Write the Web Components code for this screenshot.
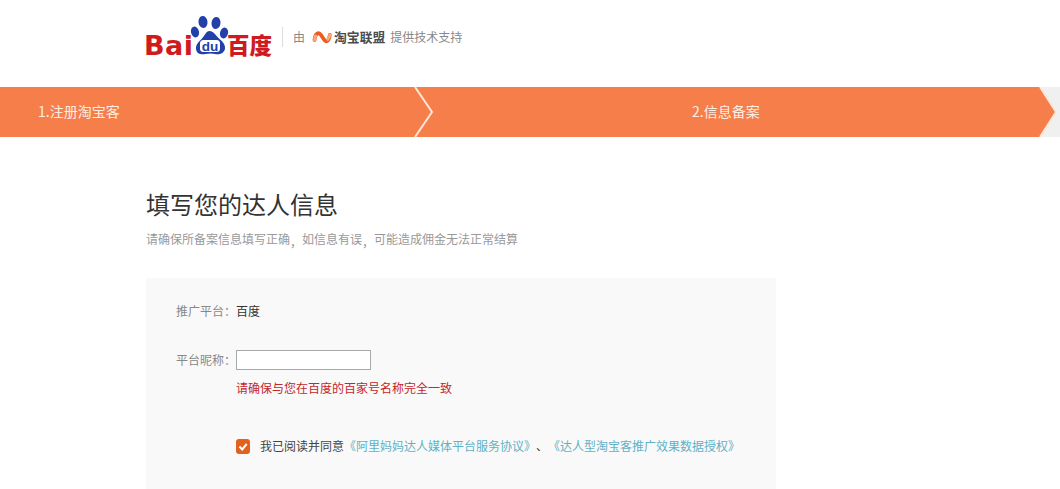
<!DOCTYPE html>
<html lang="zh-CN">
<head>
<meta charset="utf-8">
<title>填写您的达人信息</title>
<style>
html,body{margin:0;height:489px;overflow:hidden;background:#fff}
body{display:flex;flex-direction:column;font-family:"Liberation Sans","Noto Sans CJK SC",sans-serif;font-size:12px;color:#333}
</style>
</head>
<body>
<app-header></app-header>
<step-bar>
  <step-item first>1.注册淘宝客</step-item>
  <step-item>2.信息备案</step-item>
</step-bar>
<page-main>
  <span slot="title">填写您的达人信息</span>
  <span slot="sub">请确保所备案信息填写正确<punct-mark>，</punct-mark>如信息有误<punct-mark>，</punct-mark>可能造成佣金无法正常结算</span>
  <form-panel>
    <form-row label="推广平台">百度</form-row>
    <form-row label="平台昵称" class="gap"><text-box></text-box></form-row>
    <form-row class="err"><err-note>请确保与您在百度的百家号名称完全一致</err-note></form-row>
    <form-row class="agree"><agree-line></agree-line></form-row>
  </form-panel>
</page-main>
<script>
function def(name, html, init){
  customElements.define(name, class extends HTMLElement{
    constructor(){
      super();
      const t=document.createElement('template');
      t.innerHTML=typeof html==='function'?html(this):html;
      this.attachShadow({mode:'open'}).appendChild(t.content.cloneNode(true));
    }
    connectedCallback(){ if(init) init(this); }
  });
}
const CJK='"Noto Sans CJK SC","Liberation Sans",sans-serif';
const TC='"Noto Sans CJK TC","Liberation Sans",sans-serif';

def('punct-mark',`<style>:host{font-family:${TC};vertical-align:-3px;line-height:1}</style><slot></slot>`);

def('baidu-logo',`<style>
:host{display:flex;align-items:flex-end;height:44px;color:#cf1a20}
.bai{font:bold 27px/27px "DejaVu Sans",sans-serif;width:47px;letter-spacing:.5px;margin-left:-1px;padding-right:1px;white-space:nowrap}
svg{display:block;width:34px;height:44px;flex:none;overflow:visible}
.cn{font:900 22.500px/24px ${CJK};white-space:nowrap;margin:0 0 3px 1px}
</style>
<span class="bai">Bai</span>
<svg viewBox="0 0 34 44" aria-hidden="true">
  <g fill="#2340a8">
    <ellipse cx="3" cy="17" rx="4" ry="5.500" transform="rotate(-15 3 17)"/>
    <ellipse cx="11" cy="7" rx="4.500" ry="6" transform="rotate(-6 11 7)"/>
    <ellipse cx="24" cy="8" rx="4.500" ry="6" transform="rotate(6 24 8)"/>
    <ellipse cx="32" cy="18" rx="4" ry="5.500" transform="rotate(15 32 18)"/>
    <path d="M17.500 16c4 0 6 4 9 7 3.500 3 7 6 6.500 10.500-.6 5-6 6.500-10 5.500-3.500-.8-6-.8-9.500 0-4 1-9 0-9.500-5 -.5-4.500 3-7.500 6-10.500 3-3 4-7.500 7.500-7.500z"/>
  </g>
  <rect x="8" y="25" width="20" height="12" rx="3.500" fill="#fff"/>
  <text x="18" y="35.500" text-anchor="middle" font-family="Liberation Sans,sans-serif" font-weight="700" font-size="13.500" fill="#2340a8">du</text>
</svg>
<span class="cn">百度</span>`);

def('union-logo',`<style>
:host{display:flex;align-items:center;gap:2px}
svg{display:block;width:20px;height:14px;flex:none}
span{font:700 12.800px/16px ${CJK};color:#4c4c4c;white-space:nowrap}
</style>
<svg viewBox="0 0 20 14" aria-hidden="true" fill="none" stroke-linecap="round">
  <path d="M2.500 10C3 3.500 6.500 1.500 9 5l3 4.500c2 3 5 2 5.800-4.500" stroke="#e95d1e" stroke-width="3.800"/>
  <path d="M2.500 10C2.600 8.500 3 7 3.600 6M17.800 5c-.3 2-1 3.500-2 4.300" stroke="#f7a87c" stroke-width="3"/>
</svg>
<span>淘宝联盟</span>`);

def('app-header',`<style>
:host{display:flex;align-items:center;height:87px;flex:none;padding:0 0 0 145px;box-sizing:border-box;color:#888;font:12px/16px ${CJK}}
baidu-logo{margin-top:-13px}
.div{width:1px;height:20px;background:#ddd;margin:-13px 10px 0 10px}
.by{display:flex;align-items:center;margin-top:-13px;white-space:nowrap}
union-logo{margin:0 5px 0 7px}
</style>
<baidu-logo></baidu-logo>
<i class="div"></i>
<div class="by"><span>由</span><union-logo></union-logo><span>提供技术支持</span></div>`);

def('step-bar',`<style>
:host{display:flex;height:50px;flex:none;background:linear-gradient(90deg,#fff 0,#fff 1040px,#f0f0f0 1040px)}
</style><slot></slot>`);

def('step-item',`<style>
:host{display:flex;align-items:center;position:relative;height:50px;box-sizing:border-box;padding-bottom:2px;font:14px/20px ${CJK};color:#fdeee4;white-space:nowrap}
:host([first]){width:434px;flex:none;padding-left:38px;z-index:1;margin-right:-19px}
:host(:not([first])){flex:none;width:641px;padding-left:277px}
.bg{position:absolute;inset:0;width:100%;height:100%;display:block}
.t{position:relative}
</style>
<svg class="bg" preserveAspectRatio="none" aria-hidden="true"></svg>
<span class="t"><slot></slot></span>`, el=>{
  const svg=el.shadowRoot.querySelector('svg');
  const first=el.hasAttribute('first');
  const w=first?434:641, tip=first?415:625, end=first?432:641;
  svg.setAttribute('viewBox',`0 0 ${w} 50`);
  svg.innerHTML=`<path d="M0 0H${tip}L${end} 25L${tip} 50H0Z" fill="#f67e4a"/>`+
   `<path d="M${tip} 0L${end} 25L${tip} 50" fill="none" stroke="#fde6d6" stroke-width="2"/>`;
});

def('page-main',`<style>
:host{display:flex;flex-direction:column;flex:1;min-height:0;padding:51px 0 0 146px}
.title{font:24px/32px ${CJK};color:#333}
.sub{font:12px/16px ${CJK};color:#999;height:16px;margin-top:11px;margin-bottom:31px;white-space:nowrap}
::slotted(form-panel){flex:1}
</style>
<div class="title"><slot name="title"></slot></div>
<div class="sub"><slot name="sub"></slot></div>
<slot></slot>`);

def('form-panel',`<style>
:host{display:flex;flex-direction:column;width:630px;background:#f9f9f9;padding:23px 0 0 30px;box-sizing:border-box;font:12px/20px ${CJK}}
::slotted(.gap){margin-top:29px}
::slotted(.err){margin-top:10px}
::slotted(.agree){margin-top:40px}
</style><slot></slot>`);

def('form-row',el=>{
  const l=el.getAttribute('label');
  return `<style>
:host{display:grid;grid-template-columns:60px 1fr;align-items:center;color:#333}
.l{color:#888;white-space:nowrap}
.p{font-family:${TC}}
.c{grid-column:2}
</style>
<span class="l">${l?l+'<span class="p">：</span>':''}</span><div class="c"><slot></slot></div>`;
});

def('text-box',`<style>
:host{display:block;width:135px;height:20px}
input{display:block;width:100%;height:100%;box-sizing:border-box;border:1px solid #a9a9a9;background:#fff;padding:0 4px;margin:0;outline:0;border-radius:0}
</style><input type="text" aria-label="平台昵称">`);

def('err-note',`<style>:host{display:block;color:#c4262a;font:12px/16px ${CJK};white-space:nowrap}</style><slot></slot>`);

def('agree-line',`<style>
:host{display:flex;align-items:center;white-space:nowrap;color:#444}
svg{display:block;width:14px;height:15px;margin-right:10px;flex:none}
a{color:#5eb1c6;text-decoration:none}
</style>
<svg viewBox="0 0 14 15" aria-hidden="true"><rect width="14" height="15" rx="3" fill="#e4601f"/><path d="M3.500 7.500l2.700 3 4.500-5.500" fill="none" stroke="#fff" stroke-width="2"/></svg>
<span>我已阅读并同意</span><a href="#">《阿里妈妈达人媒体平台服务协议》</a><span>、</span><a href="#">《达人型淘宝客推广效果数据授权》</a>`);
</script>
</body>
</html>
